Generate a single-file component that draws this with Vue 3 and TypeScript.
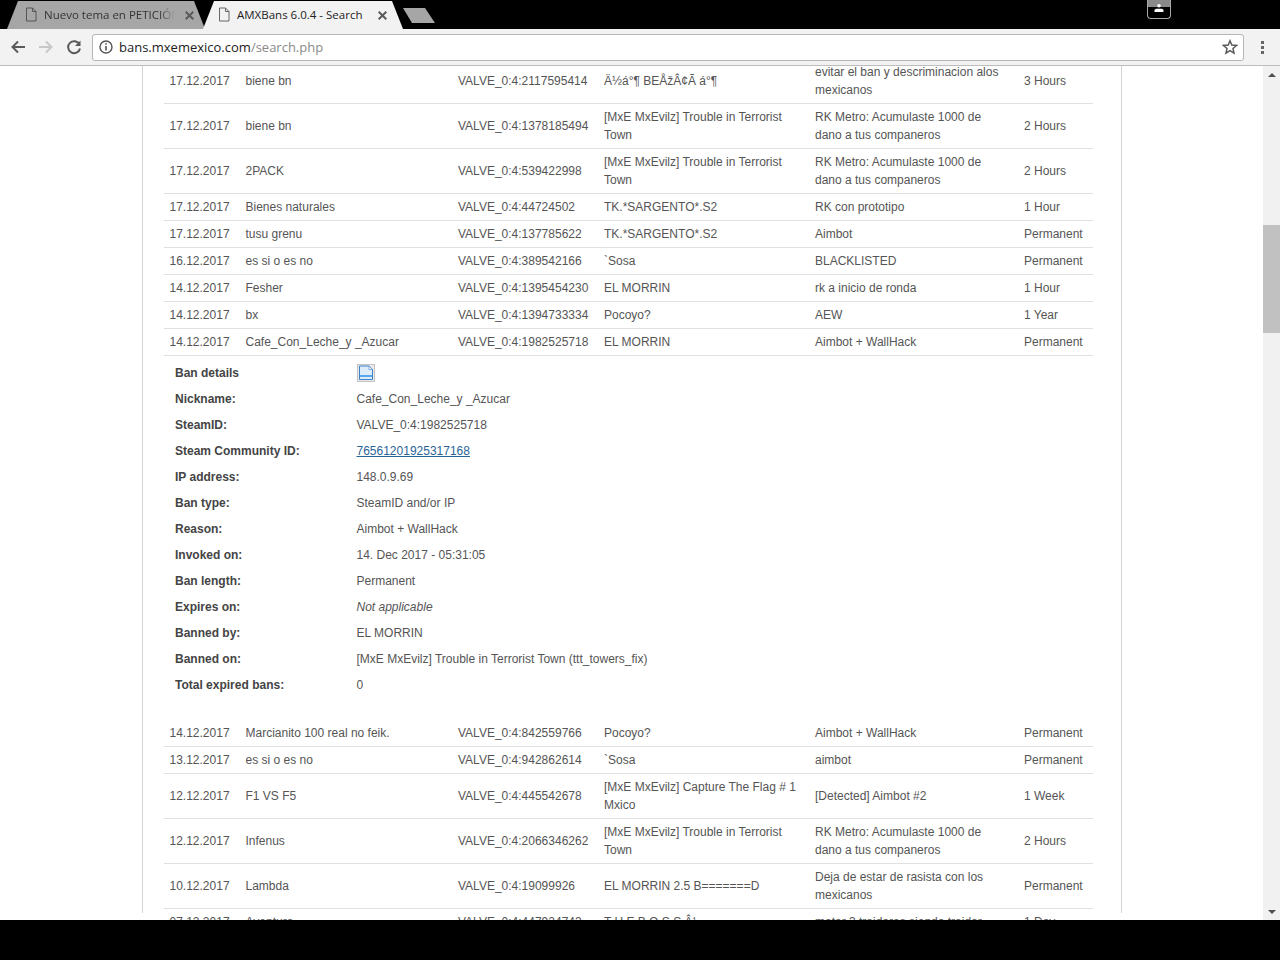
<script setup lang="ts">
interface Ban { date: string; nick: string; steam: string; server: string; reason: string; len: string }
const before: Ban[] = [
  { date: '17.12.2017', nick: 'biene bn', steam: 'VALVE_0:4:2117595414', server: 'Ä½á°¶ BEÅžÂ¢Ã á°¶', reason: 'evitar el ban y descriminacion alos mexicanos', len: '3 Hours' },
  { date: '17.12.2017', nick: 'biene bn', steam: 'VALVE_0:4:1378185494', server: '[MxE MxEvilz] Trouble in Terrorist Town', reason: 'RK Metro: Acumulaste 1000 de dano a tus companeros', len: '2 Hours' },
  { date: '17.12.2017', nick: '2PACK', steam: 'VALVE_0:4:539422998', server: '[MxE MxEvilz] Trouble in Terrorist Town', reason: 'RK Metro: Acumulaste 1000 de dano a tus companeros', len: '2 Hours' },
  { date: '17.12.2017', nick: 'Bienes naturales', steam: 'VALVE_0:4:44724502', server: 'TK.*SARGENTO*.S2', reason: 'RK con prototipo', len: '1 Hour' },
  { date: '17.12.2017', nick: 'tusu grenu', steam: 'VALVE_0:4:137785622', server: 'TK.*SARGENTO*.S2', reason: 'Aimbot', len: 'Permanent' },
  { date: '16.12.2017', nick: 'es si o es no', steam: 'VALVE_0:4:389542166', server: '`Sosa', reason: 'BLACKLISTED', len: 'Permanent' },
  { date: '14.12.2017', nick: 'Fesher', steam: 'VALVE_0:4:1395454230', server: 'EL MORRIN', reason: 'rk a inicio de ronda', len: '1 Hour' },
  { date: '14.12.2017', nick: 'bx', steam: 'VALVE_0:4:1394733334', server: 'Pocoyo?', reason: 'AEW', len: '1 Year' },
  { date: '14.12.2017', nick: 'Cafe_Con_Leche_y _Azucar', steam: 'VALVE_0:4:1982525718', server: 'EL MORRIN', reason: 'Aimbot + WallHack', len: 'Permanent' },
]
const after: Ban[] = [
  { date: '14.12.2017', nick: 'Marcianito 100 real no feik.', steam: 'VALVE_0:4:842559766', server: 'Pocoyo?', reason: 'Aimbot + WallHack', len: 'Permanent' },
  { date: '13.12.2017', nick: 'es si o es no', steam: 'VALVE_0:4:942862614', server: '`Sosa', reason: 'aimbot', len: 'Permanent' },
  { date: '12.12.2017', nick: 'F1 VS F5', steam: 'VALVE_0:4:445542678', server: '[MxE MxEvilz] Capture The Flag # 1 Mxico', reason: '[Detected] Aimbot #2', len: '1 Week' },
  { date: '12.12.2017', nick: 'Infenus', steam: 'VALVE_0:4:2066346262', server: '[MxE MxEvilz] Trouble in Terrorist Town', reason: 'RK Metro: Acumulaste 1000 de dano a tus companeros', len: '2 Hours' },
  { date: '10.12.2017', nick: 'Lambda', steam: 'VALVE_0:4:19099926', server: 'EL MORRIN 2.5 B=======D', reason: 'Deja de estar de rasista con los mexicanos', len: 'Permanent' },
  { date: '07.12.2017', nick: 'Aventura', steam: 'VALVE_0:4:447924743', server: 'T H E B O S S Â¹', reason: 'matar 3 traidores siendo traidor', len: '1 Day' },
]
const details: { label: string; value: string; kind?: string }[] = [
  { label: 'Nickname:', value: 'Cafe_Con_Leche_y _Azucar' },
  { label: 'SteamID:', value: 'VALVE_0:4:1982525718' },
  { label: 'Steam Community ID:', value: '76561201925317168', kind: 'link' },
  { label: 'IP address:', value: '148.0.9.69' },
  { label: 'Ban type:', value: 'SteamID and/or IP' },
  { label: 'Reason:', value: 'Aimbot + WallHack' },
  { label: 'Invoked on:', value: '14. Dec 2017 - 05:31:05' },
  { label: 'Ban length:', value: 'Permanent' },
  { label: 'Expires on:', value: 'Not applicable', kind: 'em' },
  { label: 'Banned by:', value: 'EL MORRIN' },
  { label: 'Banned on:', value: '[MxE MxEvilz] Trouble in Terrorist Town (ttt_towers_fix)' },
  { label: 'Total expired bans:', value: '0' },
]
</script>

<template>
  <div class="screen">
    <div class="strip">
      <div class="tab back">
        <svg class="doc" width="12" height="15" viewBox="0 0 12 15"><path d="M1.500 1h6l3.500 3.500V14h-9.500zM7.500 1v3.500H11" fill="none" stroke="#555" stroke-width="1"/></svg>
        <span class="title">Nuevo tema en PETICIÓN</span>
        <svg class="close" width="9" height="9" viewBox="0 0 9 9"><path d="m.7.700 7.600 7.600M8.300.700.7 8.300" stroke="#5a5a5a" stroke-width="2"/></svg>
      </div>
      <div class="tab front">
        <svg class="doc" width="12" height="15" viewBox="0 0 12 15"><path d="M1.500 1h6l3.500 3.500V14h-9.500zM7.500 1v3.500H11" fill="none" stroke="#666" stroke-width="1"/></svg>
        <span class="title">AMXBans 6.0.4 - Search</span>
        <svg class="close" width="9" height="9" viewBox="0 0 9 9"><path d="m.7.700 7.600 7.600M8.300.700.7 8.300" stroke="#5a5a5a" stroke-width="2"/></svg>
      </div>
      <div class="newtab"></div>
      <div class="spacer"></div>
      <div class="avatar">
        <svg width="10" height="8" viewBox="0 0 10 8"><circle cx="5" cy="1.800" r="1.800" fill="#fff"/><path d="M0.500 8V6.500q0-1.500 2-1.700h5q2 .2 2 1.700V8z" fill="#fff"/></svg>
      </div>
    </div>
    <div class="toolbar">
      <svg class="nav" width="16" height="16" viewBox="0 0 16 16"><path d="M15 8H3M8 2.500 2.500 8 8 13.500" fill="none" stroke="#5a5a5a" stroke-width="2"/></svg>
      <svg class="nav" width="16" height="16" viewBox="0 0 16 16"><path d="M1 8h12M8 2.500 13.500 8 8 13.500" fill="none" stroke="#c8c8c8" stroke-width="2"/></svg>
      <svg class="nav" width="16" height="16" viewBox="0 0 16 16"><path d="M13.500 5.500A6 6 0 1 0 14 9.500" fill="none" stroke="#5a5a5a" stroke-width="2"/><path d="M14.500 1.500v5.500H9z" fill="#5a5a5a"/></svg>
      <div class="omnibox">
        <svg width="14" height="14" viewBox="0 0 14 14"><circle cx="7" cy="7" r="6" fill="none" stroke="#555" stroke-width="1.400"/><path d="M7 6v4.500M7 3.300v1.500" stroke="#555" stroke-width="1.600"/></svg>
        <span class="url"><span class="host">bans.mxemexico.com</span><span class="path">/search.php</span></span>
        <svg class="star" width="16" height="16" viewBox="0 0 16 16"><path d="m8 1.800 1.800 4.300 4.700.4-3.500 3 1 4.600L8 11.700l-4 2.400 1-4.600-3.500-3 4.700-.4z" fill="none" stroke="#5a5a5a" stroke-width="1.500"/></svg>
      </div>
      <div class="menu"><i></i><i></i><i></i></div>
    </div>
    <div class="viewport">
      <div class="page">
        <div class="card">
          <table class="bans">
            <colgroup>
              <col class="c1"><col class="c2"><col class="c3"><col class="c4"><col class="c5"><col class="c6">
            </colgroup>
            <tbody>
              <tr v-for="(b, i) in before" :key="'b' + i" class="row">
                <td>{{ b.date }}</td><td>{{ b.nick }}</td><td>{{ b.steam }}</td><td>{{ b.server }}</td><td>{{ b.reason }}</td><td>{{ b.len }}</td>
              </tr>
              <tr>
                <td colspan="6" class="detailcell">
                  <div class="detail">
                    <div class="dlabel">Ban details</div>
                    <div class="dvalue">
                      <svg width="18" height="18" viewBox="0 0 18 18"><rect x=".5" y=".5" width="17" height="17" fill="#e8e8e8" stroke="#c4c4c4"/><path d="M2.500 2h9.500l3.500 3.500V15.500h-13z" fill="#dcecfb" stroke="#3f83c8"/><path d="M12 2v3.500h3.500z" fill="#fff" stroke="#3f83c8" stroke-width=".6"/><rect x="3" y="11" width="12" height="2" fill="#58a8ee"/></svg>
                    </div>
                    <template v-for="d in details" :key="d.label">
                      <div class="dlabel">{{ d.label }}</div>
                      <div class="dvalue">
                        <a v-if="d.kind === 'link'" class="link">{{ d.value }}</a>
                        <em v-else-if="d.kind === 'em'">{{ d.value }}</em>
                        <template v-else>{{ d.value }}</template>
                      </div>
                    </template>
                  </div>
                </td>
              </tr>
              <tr v-for="(b, i) in after" :key="'a' + i" class="row">
                <td>{{ b.date }}</td><td>{{ b.nick }}</td><td>{{ b.steam }}</td><td>{{ b.server }}</td><td>{{ b.reason }}</td><td>{{ b.len }}</td>
              </tr>
            </tbody>
          </table>
        </div>
      </div>
      <div class="scrollbar">
        <div class="arrow up"></div>
        <div class="track"><div class="thumb"></div></div>
        <div class="arrow down"></div>
      </div>
    </div>
    <div class="bottom"></div>
  </div>
</template>

<style>
html, body { margin: 0; background: #000; overflow: hidden; }
</style>

<style scoped>
.screen { width: 1280px; height: 960px; display: flex; flex-direction: column; overflow: hidden; background: #000; font-family: "Liberation Sans", Arial, sans-serif; }
.strip { height: 29px; flex: none; display: flex; align-items: flex-start; background: #000; padding-left: 7px; box-sizing: border-box; }
.tab { height: 28px; margin-top: 1px; box-sizing: border-box; display: flex; align-items: center; font: 11.500px "Open Sans", "Liberation Sans", sans-serif; color: #333; clip-path: polygon(0 100%, 11px 0, calc(100% - 11px) 0, 100% 100%); }
.back { width: 198px; padding: 0 11px 0 18px; background: #a6a6a6; }
.front { width: 200px; margin-left: -2px; padding: 0 16px 0 15px; background: #f2f2f2; color: #222; }
.doc { flex: none; margin-right: 7px; margin-bottom: 1px; }
.title { flex: 1; min-width: 0; overflow: hidden; white-space: nowrap; margin-bottom: 2px; }
.back .title { -webkit-mask-image: linear-gradient(to right, #000 88%, transparent); mask-image: linear-gradient(to right, #000 88%, transparent); }
.close { flex: none; margin-left: 10px; }
.newtab { width: 32px; height: 15px; margin: 8px 0 0 0; background: #a6a6a6; clip-path: polygon(0 0, 22px 0, 100% 100%, 9px 100%); }
.spacer { flex: 1; }
.avatar { width: 22px; height: 14px; margin-right: 109px; padding-top: 4px; border: 1px solid #aaa; border-top: 0; border-radius: 0 0 4px 4px; background: linear-gradient(#8a8a8a 0 7px, #000 7px); display: flex; align-items: flex-start; justify-content: center; }
.toolbar { height: 37px; flex: none; box-sizing: border-box; background: #f2f2f2; border-bottom: 1px solid #bdbdbd; display: flex; align-items: center; padding: 0 16px 0 10px; }
.nav { flex: none; margin-right: 12px; }
.omnibox { flex: 1; height: 27px; margin: 0 17px 0 -2px; box-sizing: border-box; background: #fff; border: 1px solid #b5b5b5; border-radius: 3px; display: flex; align-items: center; padding: 0 5px 0 6px; }
.url { flex: 1; margin-left: 6px; font: 13px "Open Sans", "Liberation Sans", sans-serif; }
.host { color: #222; }
.path { color: #8a8a8a; }
.menu { display: flex; flex-direction: column; gap: 2px; width: 3px; }
.menu i { display: block; width: 3px; height: 3px; background: #666; }
.viewport { height: 854px; flex: none; display: flex; background: #fff; overflow: hidden; }
.page { flex: 1; min-width: 0; overflow: hidden; }
.card { width: 980px; margin-left: 142px; height: 100%; box-sizing: border-box; border-left: 1px solid #d4d4d4; border-right: 1px solid #d4d4d4; padding-left: 21px; }
.bans { border-collapse: collapse; table-layout: fixed; width: 929px; margin-top: -7px; font-size: 12px; line-height: 18px; color: #555; }
.c1 { width: 75.500px; }
.c2 { width: 212.500px; }
.c3 { width: 146px; }
.c4 { width: 211px; }
.c5 { width: 209px; }
.c6 { width: 75px; }
.row td { padding: 4px 6px; border-bottom: 1px solid #dde1e6; vertical-align: middle; }
.row td:first-child { padding-left: 5.500px; }
.row td:nth-child(2), .row td:nth-child(3) { white-space: nowrap; }
.row td:nth-child(5) { padding-right: 15px; }
.detailcell { padding: 4px 0 22px; }
.detail { display: grid; grid-template-columns: 181.500px 1fr; grid-auto-rows: 26px; padding-left: 11px; align-items: center; }
.dlabel { font-weight: 700; color: #444; }
.dvalue { display: flex; align-items: center; }
.link { color: #2a6496; text-decoration: underline; }
.scrollbar { width: 17px; flex: none; background: #f1f1f1; display: flex; flex-direction: column; }
.arrow { height: 17px; flex: none; display: flex; align-items: center; justify-content: center; }
.arrow::before { content: ""; border-left: 4px solid transparent; border-right: 4px solid transparent; }
.up::before { border-bottom: 4px solid #505050; }
.down::before { border-top: 4px solid #505050; }
.track { flex: 1; padding-top: 142px; }
.thumb { height: 108px; background: #c1c1c1; }
.bottom { flex: 1; background: #000; }
</style>
